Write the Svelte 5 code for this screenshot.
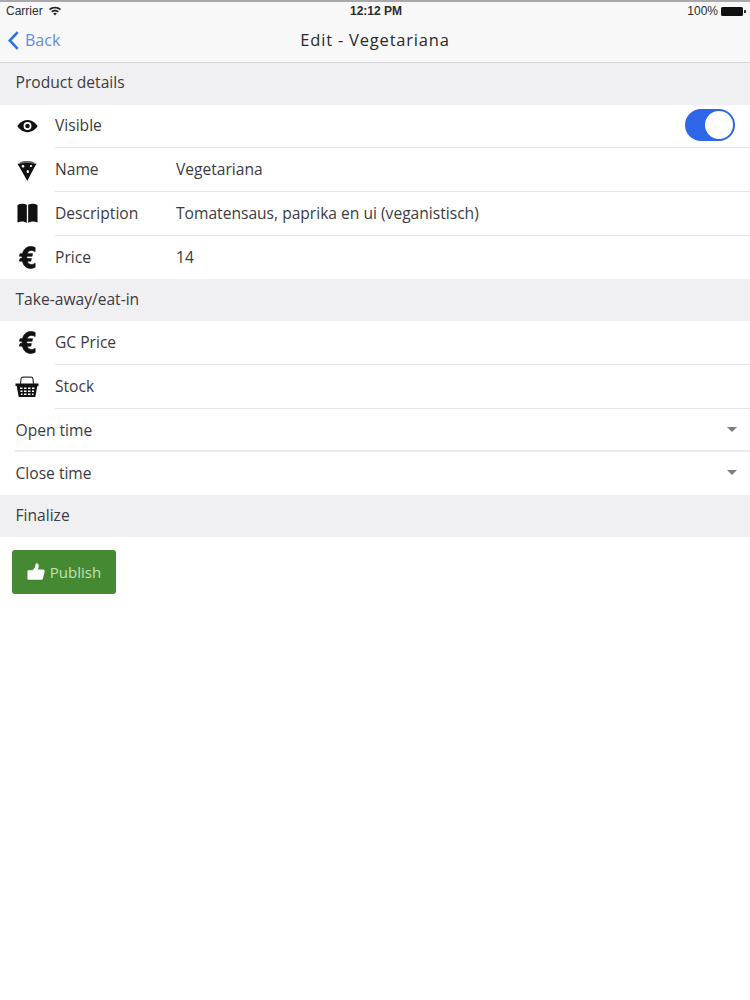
<script>
	const details = [
		{ icon: 'pizza', label: 'Name', value: 'Vegetariana' },
		{ icon: 'book', label: 'Description', value: 'Tomatensaus, paprika en ui (veganistisch)' },
		{ icon: 'euro', label: 'Price', value: '14' }
	];
	const takeaway = [
		{ icon: 'euro', label: 'GC Price', value: '' },
		{ icon: 'basket', label: 'Stock', value: '' }
	];
	const times = ['Open time', 'Close time'];
</script>

{#snippet icon(name)}
	{#if name === 'eye'}
		<svg viewBox="0 0 24 16" width="21" height="14">
			<path fill-rule="evenodd" d="M12 1C6.500 1 2.500 4.500 0.500 8c2 3.500 6 7 11.500 7s9.500-3.500 11.500-7C21.500 4.500 17.500 1 12 1zM12 3.500a4.500 4.500 0 1 1 0 9a4.500 4.500 0 0 1 0-9z" />
			<circle cx="12" cy="8" r="2.600" />
		</svg>
	{:else if name === 'pizza'}
		<svg viewBox="0 0 20 21" width="20" height="21">
			<path fill="#666" d="M3 2.200C6 .6 14 .6 17 2.200L17.500 3.500H2.500z" />
			<path fill-rule="evenodd" d="M.5 3.800C6 2.600 14 2.600 19.500 3.800L17 8 10.300 21 3 8zM6 5a1.400 1.200 0 1 0 0 2.400a1.400 1.200 0 0 0 0-2.400zM14 5a1.200 1 0 1 0 0 2a1.200 1 0 0 0 0-2zM10.800 10a1.200 1.600 0 1 0 0 3.200a1.200 1.600 0 0 0 0-3.200z" />
		</svg>
	{:else if name === 'book'}
		<svg viewBox="0 0 22 21" width="21" height="21" preserveAspectRatio="none">
			<path d="M.5 2C3.500 .3 7.500 .3 10.300 1.800V20C7.500 18 4 18 .5 19.500z" />
			<path d="M21.500 2C18.500 .3 14.500 .3 11.700 1.800V20C14.500 18 18 18 21.500 19.500z" />
		</svg>
	{:else if name === 'euro'}
		<svg viewBox="0 0 20 24" width="17" height="23" preserveAspectRatio="none">
			<path stroke="#111" stroke-width="0.700" d="M19 1.500v4.300C17.500 5 15.800 4.600 14.500 4.600c-2.400 0-4 1.200-4.700 3.400H16l-.7 2.700H9.300v2.400h5.300l-.7 2.700H9.800c.7 2.200 2.400 3.500 4.900 3.500 1.600 0 3.100-.5 4.300-1.300v4.300c-1.500.7-3.200 1.100-5 1.100-5.200 0-9-2.900-10-7.600H.5L1.200 13h2.400v-2.300H.5L1.200 8h2.900C5.300 3.300 9 .5 14 .5c1.800 0 3.500.3 5 1z" />
		</svg>
	{:else if name === 'basket'}
		<svg viewBox="0 0 24 22" width="24" height="22">
			<path fill="none" stroke="#333" stroke-width="1.200" d="M5.500 8L6 3Q6.200 1.200 8 1.200h8Q17.800 1.200 18 3L18.500 8" />
			<path fill-rule="evenodd" d="M.5 7.500h23v2.500h-1.200l-2 11H3.700l-2-11H.5zM5 11.500v1.600h2.500v-1.600zM9 11.500v1.600h2.500v-1.600zM13 11.500v1.600h2.500v-1.600zM17 11.500v1.600h2.500v-1.600zM5.500 14.500v1.600h2v-1.600zM9 14.500v1.600h2.500v-1.600zM13 14.500v1.600h2.500v-1.600zM17 14.500v1.600h2v-1.600zM6 17.500v1.500h1.500v-1.500zM9 17.500v1.500h2.500v-1.500zM13 17.500v1.500h2.500v-1.500zM17 17.500v1.500h1.500v-1.500z" />
		</svg>
	{/if}
{/snippet}

<div class="page">
	<header class="top">
		<div class="status">
			<div class="status-left">
				<span>Carrier</span>
				<svg viewBox="0 0 16 12" width="14" height="10">
					<path d="M8 1C5.200 1 2.700 2 .8 3.700l1.300 1.500C3.700 3.800 5.700 3 8 3s4.300.8 5.900 2.200l1.300-1.500C13.300 2 10.800 1 8 1z" />
					<path d="M8 4.600c-1.800 0-3.400.7-4.600 1.700l1.300 1.500C5.600 7 6.700 6.600 8 6.600s2.400.4 3.300 1.200l1.300-1.500C11.400 5.300 9.800 4.600 8 4.600z" />
					<path d="M8 8.200c-.9 0-1.600.3-2.200.8L8 11.500 10.200 9c-.6-.5-1.300-.8-2.200-.8z" />
				</svg>
			</div>
			<span class="clock">12:12 PM</span>
			<div class="status-right">
				<span>100%</span>
				<span class="battery"></span>
			</div>
		</div>
		<nav class="nav">
			<div class="back">
				<svg viewBox="0 0 14 22" width="13" height="21">
					<path d="M11.500 2L3 11l8.500 9" fill="none" stroke="#2f6fe4" stroke-width="2.800" />
				</svg>
				<span>Back</span>
			</div>
			<h1>Edit - Vegetariana</h1>
		</nav>
	</header>

	<div class="section">Product details</div>
	<div class="row with-icon">
		<span class="ico">{@render icon('eye')}</span>
		<div class="body">
			<span class="label">Visible</span>
			<span class="toggle"><span class="knob"></span></span>
		</div>
	</div>
	{#each details as item, i}
		<div class="row with-icon" class:last={i === details.length - 1}>
			<span class="ico">{@render icon(item.icon)}</span>
			<div class="body">
				<span class="label">{item.label}</span>
				<span class="value">{item.value}</span>
			</div>
		</div>
	{/each}

	<div class="section">Take-away/eat-in</div>
	{#each takeaway as item}
		<div class="row with-icon tall">
			<span class="ico">{@render icon(item.icon)}</span>
			<div class="body">
				<span class="label">{item.label}</span>
			</div>
		</div>
	{/each}
	{#each times as t, i}
		<div class="row select" class:last={i === times.length - 1}>
			<span>{t}</span>
			<span class="caret"></span>
		</div>
	{/each}

	<div class="section">Finalize</div>
	<div class="actions">
		<button class="publish">
			<svg viewBox="0 0 20 20" width="18" height="19">
				<path d="M.5 9.500C.5 8.800 1 8.500 1.700 8.500H6C8 7 9.500 4.500 9.800 .8c2-.5 3.400 1 3.200 3.400-.1 1.200-.4 2.400-.8 3.600h5.600c1.500 0 2.200 1.200 1.800 2.500l-1.800 7.300c-.3 1.200-1.100 1.700-2 1.700H2C1 19.300 .5 18.800 .5 18z" />
			</svg>
			<span>Publish</span>
		</button>
	</div>
</div>

<style>
	:global(body) {
		background: #fff;
	}

	.page {
		width: 750px;
		min-height: 1000px;
		background: #fff;
		color: #3b3b3f;
		font-family: "Open Sans", "Noto Sans", sans-serif;
		font-size: 15.6px;
	}

	.top {
		background: #f8f8f9;
		border-top: 2px solid #a9a9ab;
		border-bottom: 1px solid #d6d6d8;
		height: 60px;
	}

	.status {
		display: grid;
		grid-template-columns: 1fr auto 1fr;
		align-items: center;
		height: 18px;
		padding: 0 4px 0 6px;
		font-family: "Liberation Sans", sans-serif;
		font-size: 12px;
		color: #2c2c2e;
	}

	.status-left {
		display: flex;
		align-items: center;
		gap: 5px;
	}

	.status-left svg {
		fill: #222;
	}

	.clock {
		font-weight: 700;
		font-size: 12px;
	}

	.status-right {
		display: flex;
		align-items: center;
		justify-content: flex-end;
		gap: 3px;
	}

	.battery {
		position: relative;
		width: 22px;
		height: 9px;
		background: #111;
		border-radius: 1.500px;
		margin-right: 3px;
	}

	.battery::after {
		content: '';
		position: absolute;
		left: 23px;
		top: 3px;
		width: 1.500px;
		height: 3.500px;
		background: #333;
	}

	.nav {
		position: relative;
		display: flex;
		align-items: center;
		justify-content: center;
		box-sizing: border-box;
		height: 42px;
		padding-bottom: 3px;
	}

	.nav h1 {
		margin: 0;
		font-size: 16.5px;
		font-weight: 500;
		letter-spacing: 0.8px;
		color: #2a2a2c;
	}

	.back {
		position: absolute;
		left: 7px;
		top: 9px;
		display: flex;
		align-items: center;
		gap: 5px;
		color: #5d8ee0;
		font-size: 16px;
	}

	.section {
		display: flex;
		align-items: center;
		height: 41.500px;
		box-sizing: border-box;
		padding: 0 0 3px 15.500px;
		background: #f0f0f2;
		color: #3c3c40;
	}

	.row {
		display: flex;
		align-items: center;
		height: 43.700px;
		box-sizing: border-box;
	}

	.row.tall {
		height: 44px;
	}

	.ico {
		flex: 0 0 55px;
		display: flex;
		justify-content: center;
		box-sizing: border-box;
		padding-right: 1px;
	}

	.ico svg {
		fill: #111;
	}

	.body {
		flex: 1;
		align-self: stretch;
		display: flex;
		align-items: center;
		padding-bottom: 1px;
		border-bottom: 1px solid #e6e6e8;
	}

	.row.last .body {
		border-bottom: none;
	}

	.row.tall .body {
		padding-bottom: 0;
	}

	.label {
		flex: 0 0 121px;
	}

	.value {
		color: #3b3b3f;
	}

	.toggle {
		position: relative;
		margin-left: auto;
		margin-right: 15px;
		width: 50px;
		height: 32px;
		border-radius: 16px;
		background: #2d66e6;
	}

	.knob {
		position: absolute;
		right: 2px;
		top: 2px;
		width: 28px;
		height: 28px;
		border-radius: 50%;
		background: #fff;
	}

	.select {
		justify-content: space-between;
		height: 43.500px;
		margin-left: 15px;
		padding: 0 13px 0 0.500px;
		border-bottom: 2px solid #ececee;
	}

	.select.last {
		height: 43px;
		margin-left: 0;
		padding: 0 13px 2px 15.500px;
		border-bottom: none;
	}

	.caret {
		width: 0;
		height: 0;
		border-left: 5px solid transparent;
		border-right: 5px solid transparent;
		border-top: 5px solid #7d7d80;
	}

	.actions {
		padding: 13px 12px;
	}

	.publish {
		display: flex;
		align-items: center;
		justify-content: center;
		gap: 5px;
		width: 104px;
		height: 44px;
		padding: 0;
		border: none;
		border-radius: 3px;
		background: #458a32;
		color: #c2e2b7;
		font: inherit;
		font-size: 15px;
	}

	.publish svg {
		fill: #fff;
	}
</style>
